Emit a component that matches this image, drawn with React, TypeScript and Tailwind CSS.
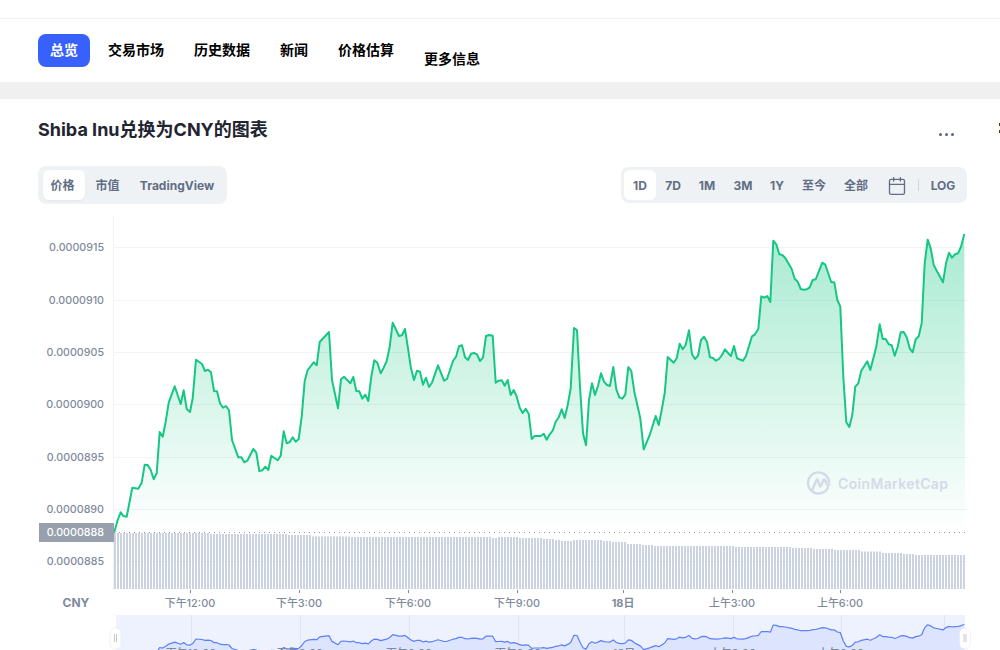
import React from 'react';
import { Calendar } from 'lucide-react';

// points read off the picture, [x, y] in 3x crop coordinates
const seg1 = [[53,900],[62,877],[70,888],[80,890],[97,803],[115,806],[125,788],[134,734],[143,735],[152,750],[161,778],[170,760],[179,636],[188,650],[197,605],[206,548],[224,499],[242,552],[251,511],[260,567],[270,576],[278,535],[288,419],[306,432],[315,453],[324,449],[333,457],[342,513],[351,514],[360,550],[369,563],[378,558],[387,571],[396,660],[415,712],[424,712],[433,727],[442,722],[460,687],[469,698],[478,753],[487,751],[496,740],[505,750],[514,707],[533,721],[542,707],[551,634],[560,670],[569,666],[578,652],[587,665],[596,657],[605,590],[614,483],[623,450],[641,427],[650,436],[659,366],[687,336],[696,480],[714,565],[723,478],[732,470],[751,490],[760,471],[769,513],[778,514],[787,536],[796,524],[805,543],[814,470],[823,421],[832,428],[842,460],[851,443],[860,423],[869,380],[878,308],[897,348]];
const seg2 = [[66,346],[75,327],[84,385],[93,445],[102,480],[111,452],[120,455],[129,494],[138,473],[147,501],[156,488],[174,436],[192,482],[201,477],[219,423],[228,410],[237,379],[246,376],[255,412],[264,420],[273,401],[282,399],[291,403],[300,423],[309,413],[318,348],[327,345],[338,347],[347,488],[356,482],[365,481],[374,497],[383,480],[392,525],[401,510],[410,530],[419,563],[428,579],[437,566],[446,581],[455,657],[464,648],[482,648],[491,641],[500,659],[509,643],[518,632],[527,605],[536,592],[545,568],[554,594],[563,555],[572,505],[582,324],[591,330],[600,500],[609,640],[618,676],[627,540],[636,490],[645,525],[654,498],[663,460],[672,485],[681,495],[690,498],[700,441],[709,508],[718,532],[727,536],[736,524],[745,441],[754,453],[763,515],[772,555],[781,595],[791,688],[809,645],[827,588],[836,615],[845,570],[854,520],[863,411],[881,428],[890,415],[899,371]];
const seg3 = [[38,388],[47,375],[57,331],[66,403],[75,417],[84,407],[93,360],[102,350],[111,366],[120,412],[129,414],[138,422],[147,417],[156,405],[165,388],[174,399],[183,408],[192,378],[201,415],[219,422],[228,408],[237,378],[246,349],[255,343],[265,327],[274,229],[283,233],[292,228],[301,246],[310,62],[319,73],[328,103],[337,105],[346,114],[365,147],[374,176],[383,185],[392,207],[401,209],[410,208],[419,202],[428,180],[437,178],[457,128],[466,134],[484,187],[493,187],[502,240],[511,260],[520,470],[529,607],[538,621],[547,585],[556,500],[565,490],[574,452],[592,424],[601,450],[619,380],[629,313],[638,357],[647,357],[656,373],[665,376],[674,407],[683,380],[692,337],[701,336],[710,352],[719,385],[728,397],[737,358],[746,349],[755,310],[764,130],[773,59],[782,85],[791,135],[800,152],[819,187],[828,130],[837,98],[846,113],[855,103],[864,100],[873,80],[883,42]];

const toPage = (pts: number[][], ox: number) => pts.map(([x, y]) => [ox + x / 3, 220 + y / 3]);
const points = [[114, 533], ...toPage(seg1, 100), ...toPage(seg2, 380), ...toPage(seg3, 670)];
const linePath = points.map(([x, y]) => `${x.toFixed(1)},${y.toFixed(1)}`).join(' ');
const areaPath = `114,533 ${linePath} 965,533`;

const navPoints = points.map(([x, y]) => `${x.toFixed(1)},${(625 + (y - 241) * 0.118).toFixed(1)}`).join(' ');
const navArea = `114,660 ${navPoints} 965,660`;

const priceTicks = [
  { y: 247, label: '0.0000915' },
  { y: 300, label: '0.0000910' },
  { y: 352, label: '0.0000905' },
  { y: 404, label: '0.0000900' },
  { y: 457, label: '0.0000895' },
  { y: 509, label: '0.0000890' },
  { y: 561, label: '0.0000885' },
];

const timeTicks = [
  { x: 190, label: '下午12:00' },
  { x: 299, label: '下午3:00' },
  { x: 408, label: '下午6:00' },
  { x: 517, label: '下午9:00' },
  { x: 623, label: '18日', bold: true },
  { x: 732, label: '上午3:00' },
  { x: 840, label: '上午6:00' },
];

// volume bar top edge by x
const volumeSteps = [
  [210, 533], [287, 534], [310, 535], [350, 536.5], [490, 537], [497, 538], [518, 537], [541, 538],
  [554, 539], [560, 540], [572, 541], [603, 540], [610, 541], [627, 542], [640, 544], [652, 545],
  [733, 546], [790, 547], [813, 548], [833, 549], [860, 550], [880, 551.5], [903, 553], [915, 554], [970, 555],
];
const bars: { x: number; top: number }[] = [];
for (let x = 114; x < 965; x += 3) {
  const step = volumeSteps.find(([end]) => x < end);
  bars.push({ x, top: step ? step[1] : 555 });
}

const navTabs = ['交易市场', '历史数据', '新闻', '价格估算'];

const ranges = [
  { label: '1D', w: 'w-[32px]', active: true },
  { label: '7D', w: 'w-[34px]' },
  { label: '1M', w: 'w-[34px]' },
  { label: '3M', w: 'w-[38px]' },
  { label: '1Y', w: 'w-[30px]' },
  { label: '至今', w: 'w-[44px]' },
  { label: '全部', w: 'w-[40px]' },
];

const Chart = () => (
  <svg className="block h-[446px] w-[1000px]" viewBox="0 204 1000 446">
    <defs>
      <linearGradient id="area" gradientUnits="userSpaceOnUse" x1="0" y1="233" x2="0" y2="533">
        <stop offset="0" stopColor="#16c784" stopOpacity="0.37" />
        <stop offset="1" stopColor="#16c784" stopOpacity="0" />
      </linearGradient>
    </defs>

    <line x1="113.5" y1="215" x2="113.5" y2="590" stroke="#eff2f5" />
    {priceTicks.map((t) => (
      <g key={t.y}>
        <line x1="113" y1={t.y + 0.5} x2="967" y2={t.y + 0.5} stroke="#f1f3f6" />
        <text x="104" y={t.y + 4} textAnchor="end" fontSize="10.7" fontWeight="500" fill="#808a9d">{t.label}</text>
      </g>
    ))}

    <polygon points={areaPath} fill="url(#area)" />

    {bars.map((b) => (
      <rect key={b.x} x={b.x} y={b.top} width="2" height={589 - b.top} fill="#cbd3e0" />
    ))}

    <polyline points={linePath} fill="none" stroke="#16c784" strokeWidth="2" strokeLinejoin="round" />

    <line x1="114" y1="532.5" x2="967" y2="532.5" stroke="#8f97a5" strokeDasharray="1 4" />
    <rect x="39" y="523" width="75" height="19" fill="#98a0ae" />
    <text x="104" y="536" textAnchor="end" fontSize="10.7" fontWeight="500" fill="#ffffff">0.0000888</text>

    <path d="M828 487.5 A10.5 10.5 0 1 1 829 482" fill="none" stroke="#d5d9e8" strokeWidth="2.4" strokeLinecap="round" />
    <path d="M812.5 489.5 L816.5 480 Q817.5 478.5 818 480.5 L819.5 485.5 Q820 487 821 485.5 L823.5 480 Q824.5 478.5 825.5 481 L827 484.5 Q828 486 829.5 484.5" fill="none" stroke="#d5d9e8" strokeWidth="2.4" strokeLinecap="round" strokeLinejoin="round" />
    <text x="838" y="489" fontSize="14" fontWeight="600" letterSpacing="0.35" fill="#d5d9e8">CoinMarketCap</text>

    <text x="76" y="607" textAnchor="middle" fontSize="12" fontWeight="700" fill="#808a9d">CNY</text>
    {timeTicks.map((t) => (
      <g key={t.x}>
        <line x1={t.x + 0.5} y1="590" x2={t.x + 0.5} y2="593" stroke="#808a9d" />
        <text x={t.x} y="607" textAnchor="middle" fontSize="10.9" fontWeight={t.bold ? 700 : 500} fill="#808a9d">{t.label}</text>
      </g>
    ))}

    {/* range navigator */}
    <rect x="116" y="615" width="849" height="35" fill="#eef1fe" />
    {[...timeTicks.map((t) => t.x + 1), 944].map((x) => (
      <line key={x} x1={x + 0.5} y1="615" x2={x + 0.5} y2="650" stroke="#dfe3f3" />
    ))}
    <polygon points={navArea} fill="#dde4fe" />
    <polyline points={navPoints} fill="none" stroke="#5b80fb" strokeWidth="1.2" strokeLinejoin="round" />
    {timeTicks.map((t) => (
      <text key={t.x} x={t.x + 1} y="657" textAnchor="middle" fontSize="10.9" fontWeight="500" fill="#808a9d">{t.label}</text>
    ))}
    {[115.5, 965].map((x) => (
      <g key={x}>
        <rect x={x - 5.5} y="628" width="11" height="21" rx="5.5" fill="#ffffff" stroke="#e6e9f0" strokeWidth="0.6" />
        <line x1={x - 1} y1="634" x2={x - 1} y2="642" stroke="#c4c9d6" />
        <line x1={x + 1} y1="634" x2={x + 1} y2="642" stroke="#c4c9d6" />
      </g>
    ))}
  </svg>
);

const App = () => {
  return (
    <div className="relative h-[650px] w-[1000px] overflow-hidden bg-white font-[Inter,'Noto_Sans_CJK_SC',sans-serif]">
      <div className="h-[19px] border-b border-[#eff2f5]" />

      <nav className="flex h-[63px] items-start pl-[38px] pt-[15px] text-sm font-bold text-black">
        <button className="mr-[18px] h-[33px] w-[52px] rounded-lg bg-[#3861fb] pb-[2px] text-white">总览</button>
        <div className="flex gap-[30px]">
          {navTabs.map((tab) => (
            <a key={tab} className="flex h-[33px] items-center pb-[2px]">{tab}</a>
          ))}
          <a className="mt-[9px] flex h-[33px] items-center pb-[2px]">更多信息</a>
        </div>
      </nav>

      <div className="h-[17px] bg-[#f0f0f0]" />

      <section className="pt-[19px]">
        <div className="flex h-[24px] items-center justify-between pl-[38px] pr-[46px]">
          <h2 className="text-lg font-bold leading-6 text-[#222531]">Shiba Inu兑换为CNY的图表</h2>
          <svg className="mt-2" width="15" height="3" viewBox="0 0 15 3" fill="#58667e">
            <circle cx="1.5" cy="1.5" r="1.5" />
            <circle cx="7.5" cy="1.5" r="1.5" />
            <circle cx="13.5" cy="1.5" r="1.5" />
          </svg>
        </div>

        <div className="mt-6 flex h-[38px] items-center justify-between pl-[38px] pr-[33px] text-xs font-bold text-[#616e85]">
          <div className="flex h-[38px] items-center rounded-lg bg-[#eff2f5] p-[5px]">
            <button className="h-[30px] w-[42px] rounded-md bg-white pr-[3px] pt-px shadow-[0_1px_2px_rgba(88,102,126,0.08)]">价格</button>
            <button className="h-[30px] w-[45px] pt-px">市值</button>
            <button className="h-[30px] w-[92px] pl-[2px] pt-px">TradingView</button>
          </div>
          <div className="flex h-[36px] items-center rounded-lg bg-[#eff2f5] pl-[3px]">
            {ranges.map((r) => (
              <button key={r.label} className={`h-[30px] rounded-md pt-px ${r.w} ${r.active ? 'bg-white' : ''}`}>{r.label}</button>
            ))}
            <button className="flex h-[30px] w-[42px] items-center justify-center pt-px">
              <Calendar size={20} strokeWidth={1.6} />
            </button>
            <span className="h-[12px] w-px bg-[#cfd6e4]" />
            <button className="h-[30px] w-[48px] pt-px">LOG</button>
          </div>
        </div>

        <Chart />
      </section>

      <div className="absolute left-[999px] top-[123px] h-[3px] w-px bg-[#5a3a00]" />
      <div className="absolute left-[999px] top-[130px] h-[3px] w-px bg-[#5a3a00]" />
    </div>
  );
};

export default App;
